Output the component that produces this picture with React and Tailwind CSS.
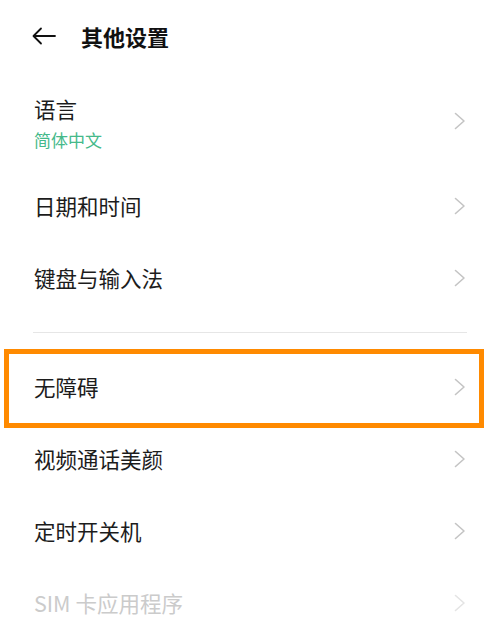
import React from 'react';

const font = { fontFamily: '"Noto Sans CJK SC", "Noto Sans", sans-serif' };

const Chevron = ({ light }) => (
    <svg width="12" height="18" viewBox="0 0 12 18" fill="none" className="shrink-0">
        <path d="M1.5 1.5 L10 9 L1.5 16.5" stroke={light ? '#e4e4e4' : '#c4c4c4'} strokeWidth="1.6" strokeLinecap="round" strokeLinejoin="round" />
    </svg>
);

const Row = ({ title, light, highlight }) => (
    <div className="relative">
        <div className="flex items-center justify-between h-[72px] pl-[34px] pr-[34px]">
            <span className={`text-[21.5px] leading-none ${light ? 'text-[#cbcbcb]' : 'text-[#1c1c1c]'}`}>{title}</span>
            <Chevron light={light} />
        </div>
        {highlight && (
            <div className="absolute left-[4px] right-[16px] top-[-2px] bottom-[-5px] border-[5px] border-[#ff8a00] pointer-events-none"></div>
        )}
    </div>
);

export default function App() {
    return (
        <div className="w-[500px] h-[629px] bg-white overflow-hidden" style={font}>
            <div className="flex items-center h-[72px] pl-[32px]">
                <svg width="24" height="18" viewBox="0 0 24 18" fill="none">
                    <path d="M23 9 H2 M9 1.5 L1.5 9 L9 16.5" stroke="#111" strokeWidth="1.8" strokeLinecap="round" strokeLinejoin="round" />
                </svg>
                <span className="ml-[25px] text-[22px] font-bold text-[#111]">其他设置</span>
            </div>

            <div className="flex items-center justify-between h-[98px] pl-[34px] pr-[34px]">
                <div className="flex flex-col pt-[4px]">
                    <span className="text-[21.5px] leading-none text-[#1c1c1c]">语言</span>
                    <span className="text-[17px] leading-none mt-[12px] text-[#45b98a]">简体中文</span>
                </div>
                <Chevron />
            </div>
            <Row title="日期和时间" />
            <Row title="键盘与输入法" />

            <div className="py-[18px] px-[33px]">
                <div className="h-px bg-[#e6e6e6]"></div>
            </div>

            <Row title="无障碍" highlight />
            <Row title="视频通话美颜" />
            <Row title="定时开关机" />
            <Row title="SIM 卡应用程序" light />
        </div>
    );
}
